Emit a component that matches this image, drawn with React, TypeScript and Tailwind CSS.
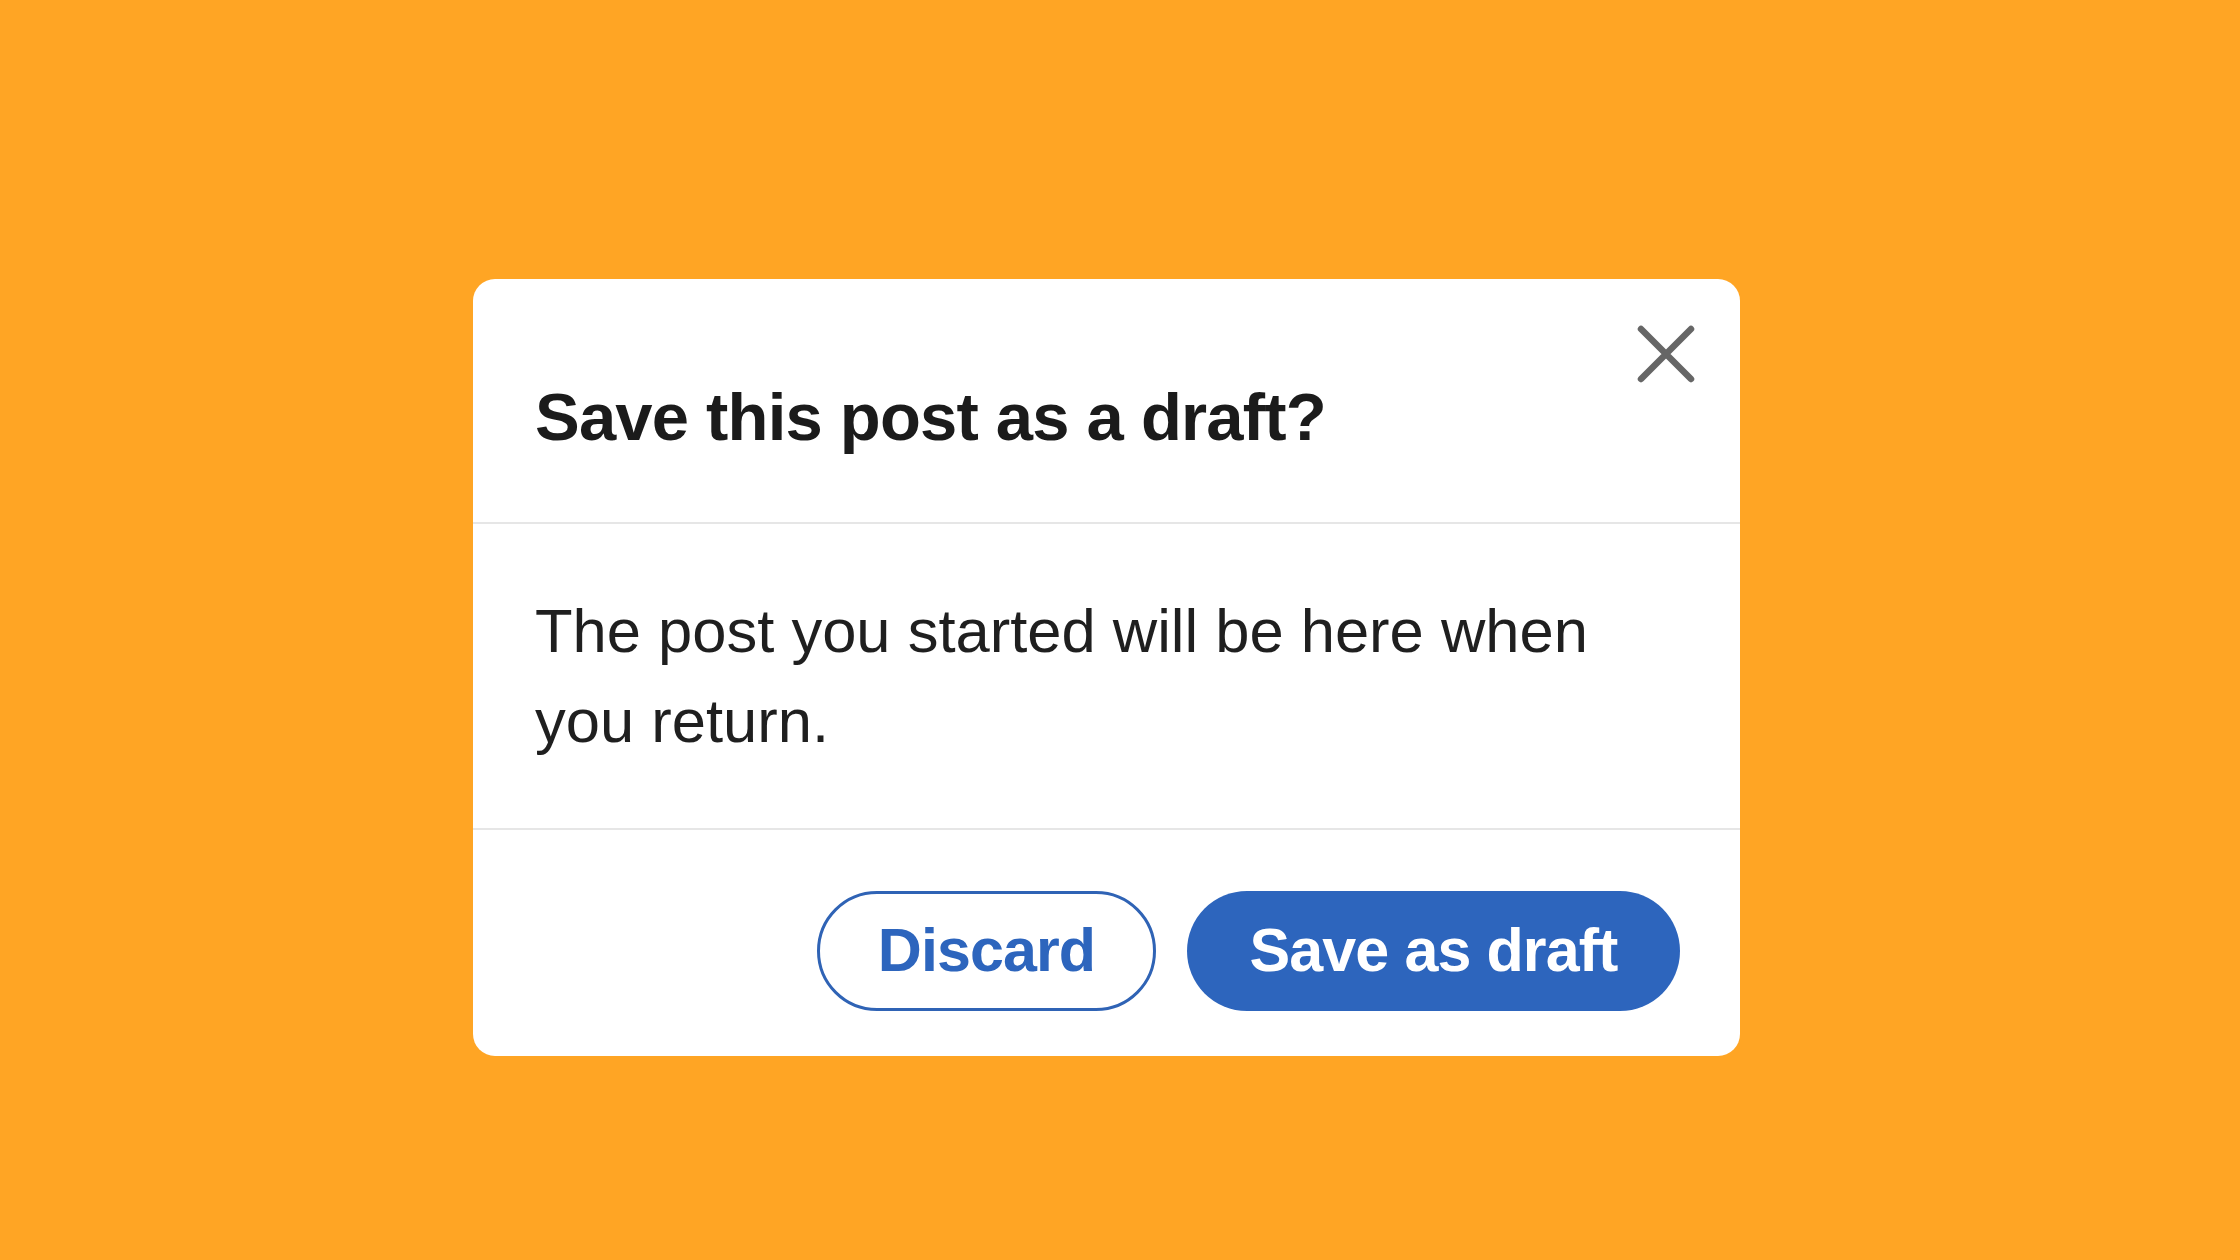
import React from 'react';

const CloseIcon: React.FC = () => (
    <svg width="58" height="58" viewBox="0 0 58 58" fill="none">
        <path d="M4 4 L54 54 M54 4 L4 54" stroke="#666666" strokeWidth="6.5" strokeLinecap="round" />
    </svg>
);

export default function App() {
    return (
        <div className="min-h-screen w-full bg-[#ffa524] pt-[279px] pl-[473px] font-['Liberation_Sans',Arial,sans-serif]">
            <div className="w-[1267px] bg-white rounded-[22px] overflow-hidden">
                {/* Header */}
                <div className="pt-[46px] pr-[45px] pl-[62px] pb-[72px] border-b-2 border-[#e6e6e6]">
                    <div className="flex justify-end">
                        <button className="w-[58px] h-[58px] flex items-center justify-center" aria-label="Close">
                            <CloseIcon />
                        </button>
                    </div>
                    <h2 className="text-[67px] leading-none font-bold tracking-[-0.8px] text-[#1b1b1b]">
                        Save this post as a draft?
                    </h2>
                </div>

                {/* Body */}
                <div className="px-[62px] py-[62px] border-b-2 border-[#e6e6e6]">
                    <p className="text-[61.5px] leading-[90px] text-[#1f1f1f]">
                        The post you started will be here when you return.
                    </p>
                </div>

                {/* Footer */}
                <div className="flex justify-end gap-[31px] pt-[61px] pb-[45px] pr-[60px]">
                    <button className="h-[120px] w-[339px] rounded-full border-[3px] border-[#2f63b5] text-[#2d65bd] text-[61px] font-bold tracking-[-0.9px] flex items-center justify-center">
                        Discard
                    </button>
                    <button className="h-[120px] w-[493px] rounded-full bg-[#2d65bd] text-white text-[61px] font-bold tracking-[-0.9px] flex items-center justify-center">
                        Save as draft
                    </button>
                </div>
            </div>
        </div>
    );
}
